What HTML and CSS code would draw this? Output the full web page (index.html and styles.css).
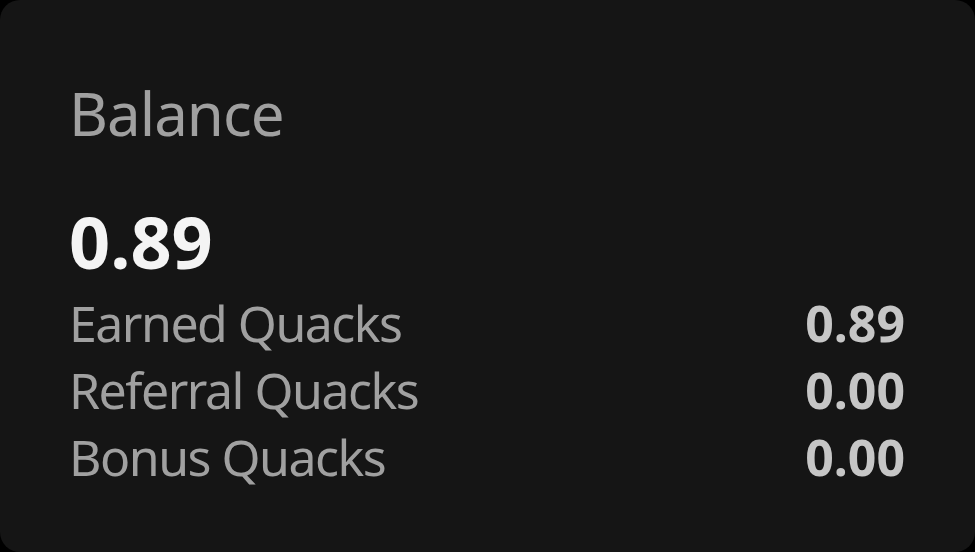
FILE: index.html
```html
<!DOCTYPE html>
<html lang="en">
  <head>
    <meta name="viewport" content="width=device-width, initial-scale=1.0" />
    <link rel="stylesheet" href="styles.css">
  </head>
  <body>
    <div class="balance-card">
      <div class="balance-title">Balance</div>
      <div class="balance-total">0.89</div>
      <div class="balance-rows">
        <div class="balance-row">
          <span class="balance-label">Earned Quacks</span>
          <span class="balance-value">0.89</span>
        </div>
        <div class="balance-row">
          <span class="balance-label">Referral Quacks</span>
          <span class="balance-value">0.00</span>
        </div>
        <div class="balance-row">
          <span class="balance-label">Bonus Quacks</span>
          <span class="balance-value">0.00</span>
        </div>
      </div>
    </div>
  </body>
</html>
```

FILE: styles.css
```css
html,
body {
  margin: 0;
  height: 100%;
  background: #000;
}
body {
  font-family: "Noto Sans", sans-serif;
}

.balance-card {
  box-sizing: border-box;
  height: 552px;
  background: #151515;
  border-radius: 20px;
  padding: 73px 70px 0 69px;
  display: flex;
  flex-flow: column;
}

.balance-title {
  font-size: 60px;
  line-height: 80px;
  letter-spacing: -1px;
  color: #a0a0a0;
}

.balance-total {
  margin-top: 48px;
  font-size: 72px;
  font-weight: 700;
  line-height: 80px;
  color: #f4f4f4;
}

.balance-rows {
  margin-top: 9px;
  display: flex;
  flex-flow: column;
}
.balance-row {
  display: flex;
  justify-content: space-between;
  align-items: baseline;
  line-height: 67px;
}
.balance-label {
  font-size: 50px;
  letter-spacing: -1.5px;
  color: #a0a0a0;
}
.balance-value {
  font-size: 50px;
  font-weight: 700;
  color: #c6c6c6;
}
```
